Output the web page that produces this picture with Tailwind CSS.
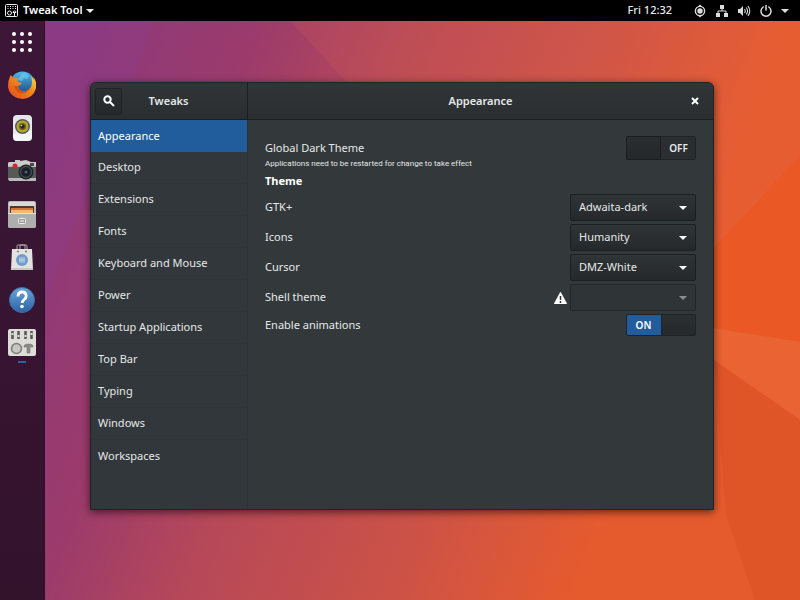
<!DOCTYPE html>
<html lang="en">
<head>
    <meta charset="UTF-8">
    <meta name="viewport" content="width=device-width, initial-scale=1.0">
    <title>Tweak Tool</title>
    <script src="https://cdn.jsdelivr.net/npm/@tailwindcss/browser@4"></script>
</head>
<body class="min-h-screen flex flex-col bg-[#b5475c] font-['Noto_Sans','Open_Sans',sans-serif] text-[11px] text-[#e6e8e8]">

    <!-- Top bar -->
    <header class="h-[21px] shrink-0 bg-black flex items-center justify-between pl-1 pr-[11px] font-semibold">
        <button class="flex items-center gap-[3px] text-white">
            <svg class="size-4" viewBox="0 0 16 16" fill="none" stroke="#eee">
                <rect x="1.5" y="1.5" width="12" height="12" rx="1" />
                <path d="M4 3v3M6.500 3v3M9 3v3M11.500 3v3" stroke-dasharray="1 1" />
                <circle cx="5.500" cy="10" r="2" />
                <path d="M9 9.500a1.500 1.500 0 0 1 3 0zM10.500 10v3" />
            </svg>
            Tweak Tool
            <svg class="w-2 h-1" viewBox="0 0 8 4" fill="#eee"><path d="M0 0h8L4 4z" /></svg>
        </button>
        <div class="flex items-center gap-[21px]">
            <time class="font-medium">Fri 12:32</time>
            <button class="flex items-center gap-2" aria-label="System menu">
                <svg class="size-3.5" viewBox="0 0 14 14" fill="#ddd">
                    <circle cx="7" cy="7" r="4.600" fill="none" stroke="#ddd" stroke-width="1.400" />
                    <circle cx="7" cy="7" r="2.700" />
                    <path d="M5 2.500L7 .5l2 2zM5 11.500l2 2 2-2z" />
                </svg>
                <svg class="size-3.5" viewBox="0 0 14 14" fill="#ddd">
                    <path d="M5 1h4v4H5zM1 9h4v4H1zM9 9h4v4H9z" />
                    <path d="M7 5v2M3 9V7h8v2" fill="none" stroke="#ddd" />
                </svg>
                <svg class="size-3.5" viewBox="0 0 14 14" fill="#ddd">
                    <path d="M1 5h2l3-3v10L3 9H1z" />
                    <path d="M7.500 5q1.500 2 0 4M9.300 3.500q2.500 3.500 0 7M11 2q3.500 5 0 10" fill="none" stroke="#ddd" stroke-width="1.100" />
                </svg>
                <svg class="size-3.5" viewBox="0 0 14 14" fill="none" stroke="#ddd" stroke-width="1.500" stroke-linecap="round">
                    <path d="M4.200 3A5 5 0 1 0 9.800 3M7 1.500V6" />
                </svg>
                <svg class="w-2 h-1" viewBox="0 0 8 4" fill="#ddd"><path d="M0 0h8L4 4z" /></svg>
            </button>
        </div>
    </header>

    <div class="flex-1 flex relative">
        <!-- Wallpaper -->
        <svg class="absolute inset-0 w-full h-full" viewBox="0 21 800 579" preserveAspectRatio="none" aria-hidden="true">
            <defs>
                <linearGradient id="wall" gradientUnits="userSpaceOnUse" x1="45" y1="100" x2="700" y2="350">
                    <stop offset="0" stop-color="#8b397f" />
                    <stop offset=".25" stop-color="#9c3b6b" />
                    <stop offset=".44" stop-color="#b64858" />
                    <stop offset=".71" stop-color="#cc5247" />
                    <stop offset=".96" stop-color="#e65b2e" />
                </linearGradient>
            </defs>
            <rect y="21" width="800" height="579" fill="url(#wall)" />
            <path d="M45 21H152L130 90 45 300z" fill="#8a4090" fill-opacity=".25" />
            <path d="M290 21L340 75 362 100 714 250 800 155V21z" fill="#f07050" fill-opacity=".12" />
            <path d="M800 155L714 248V328L800 342z" fill="#ea5826" />
            <path d="M714 328L800 342V420L714 360z" fill="#ea6433" />
            <path d="M714 360L800 420V600H755L726 515z" fill="#df5528" />
        </svg>

        <!-- Dock -->
        <nav class="relative w-[45px] shrink-0 bg-linear-to-b from-[#3c1738] to-[#33122c] border-r border-[#2d0f2a] flex flex-col items-center gap-[15px] pt-[7px]" aria-label="Dock">
            <button class="size-7" aria-label="Show applications">
                <svg viewBox="0 0 28 28" fill="#fff">
                    <circle cx="6" cy="6" r="2" /><circle cx="14" cy="6" r="2" /><circle cx="22" cy="6" r="2" />
                    <circle cx="6" cy="14" r="2" /><circle cx="14" cy="14" r="2" /><circle cx="22" cy="14" r="2" />
                    <circle cx="6" cy="22" r="2" /><circle cx="14" cy="22" r="2" /><circle cx="22" cy="22" r="2" />
                </svg>
            </button>
            <button class="size-7" aria-label="Firefox">
                <svg viewBox="0 0 28 28">
                    <defs>
                        <linearGradient id="globe" x2="0" y2="1"><stop stop-color="#52b8e8" /><stop offset="1" stop-color="#123f7c" /></linearGradient>
                        <linearGradient id="fox" x1=".2" y1="1" x2="1" y2=".2"><stop stop-color="#e4501c" /><stop offset=".6" stop-color="#f08a1c" /><stop offset="1" stop-color="#f9d13c" /></linearGradient>
                    </defs>
                    <circle cx="14.500" cy="13" r="12.500" fill="url(#globe)" />
                    <path d="M13 3l4-1 4 3-2 3-3-1-2 3-4-1z" fill="#79cdf0" fill-opacity=".6" />
                    <path d="M2.500 4Q4 5 5 7q3-1 5 0-1 2 0 4l4 1q-1 2-4 3 0 4 4 5 6 1 9-4 2-5 0-11 2 2 2.500 4V6q3 5 3 9-2 12-13.500 13Q2 27 0 16 0 9 2.500 4z" fill="url(#fox)" />
                    <path d="M10 15q0 4 4 5 4 1 8-2-5 6-11 4-4-2-5-7z" fill="#cb4515" fill-opacity=".7" />
                </svg>
            </button>
            <button class="size-7" aria-label="Rhythmbox">
                <svg viewBox="0 0 28 28">
                    <rect x="5" y="1" width="19" height="26" rx="4" fill="#e4e6ea" />
                    <path d="M5 20l19-3v6q0 4-4 4H9q-4 0-4-4z" fill="#fff" fill-opacity=".6" />
                    <circle cx="14.500" cy="12.500" r="7.500" fill="#55595c" />
                    <circle cx="14.500" cy="12.500" r="6" fill="#b9a92a" />
                    <circle cx="14.500" cy="12.500" r="3.800" fill="#77701a" />
                    <circle cx="14.500" cy="12.500" r="2.200" fill="#242622" />
                    <circle cx="13.500" cy="11.500" r=".8" fill="#ddd" />
                </svg>
            </button>
            <button class="size-7" aria-label="Shotwell">
                <svg viewBox="0 0 28 28">
                    <path d="M1 5h6V3h5v1l6-1 5 2h5v6H0V6z" fill="#c9cccb" />
                    <rect y="9" width="28" height="14" rx="1" fill="#555a58" />
                    <path d="M0 9h28v1H0zM0 21h28v3H1z" fill="#b7bab8" />
                    <rect x="22" y="6" width="4" height="3" fill="#454949" />
                    <circle cx="7" cy="9" r="2.500" fill="#d92430" />
                    <circle cx="18" cy="15" r="7.500" fill="#202326" />
                    <circle cx="18" cy="15" r="5.500" fill="none" stroke="#525a60" />
                    <circle cx="18" cy="15" r="3.500" fill="#171e2b" />
                    <circle cx="18" cy="15" r="1.500" fill="#52607a" />
                </svg>
            </button>
            <button class="size-7" aria-label="Files">
                <svg viewBox="0 0 28 28">
                    <rect y="1" width="28" height="27" rx="2" fill="#b9b9b7" />
                    <path d="M1 2h26v4H1z" fill="#dad9d6" />
                    <path d="M2 6h24v7H2z" fill="#503a2c" />
                    <path d="M3 8h22v2H3z" fill="#d9752e" />
                    <path d="M3 10h22v3H3z" fill="#f3b775" />
                    <path d="M0 14h28v12q0 2-2 2H2q-2 0-2-2z" fill="#aeafad" />
                    <path d="M0 13h28v1H0z" fill="#e5e5e3" />
                    <rect x="10.500" y="18.500" width="7" height="5" rx="1" fill="#999" stroke="#eee" />
                    <path d="M12 21h4" stroke="#fff" />
                </svg>
            </button>
            <button class="size-7" aria-label="Software">
                <svg viewBox="0 0 28 28">
                    <path d="M9 7V3q0-1 1-1h8q1 0 1 1v4M12 6V2h5v4" fill="none" stroke="#aaa8a8" />
                    <path d="M4 6h20l1 21H3z" fill="#e4e2e0" />
                    <path d="M3 25h22v2H3z" fill="#c9c6c5" />
                    <circle cx="10" cy="8.500" r="1" fill="#777" /><circle cx="18" cy="8.500" r="1" fill="#777" />
                    <circle cx="14" cy="17" r="6" fill="#6f9bc6" />
                    <path d="M12 14v6M14 14v6M16 14v6" stroke="#c0d7ec" />
                    <path d="M11 17h6" stroke="#c0d7ec" />
                </svg>
            </button>
            <button class="size-7" aria-label="Help">
                <svg viewBox="0 0 28 28">
                    <defs><linearGradient id="help" x2="0" y2="1"><stop stop-color="#6ba5d6" /><stop offset="1" stop-color="#2b63a5" /></linearGradient></defs>
                    <circle cx="14" cy="14" r="12.500" fill="url(#help)" stroke="#3c6ea8" />
                    <path d="M10 10.500q0-4.500 4-4.500t4.200 4q0 2-2 3.500t-2 3.500" fill="none" stroke="#fff" stroke-width="2.800" />
                    <circle cx="14" cy="20.500" r="1.800" fill="#fff" />
                </svg>
            </button>
            <button class="w-7 h-9" aria-label="Tweak Tool">
                <svg viewBox="0 0 28 36">
                    <rect y="0" width="28" height="27" rx="2" fill="#dddcd8" />
                    <path d="M4.500 2v8M10.500 2v8M17.500 2v8M23.500 2v8" stroke="#55554f" stroke-width="2.500" />
                    <path d="M4.500 4v2M10.500 6v2M17.500 6v2M23.500 4v2" stroke="#ddd" stroke-width="2" />
                    <circle cx="8.500" cy="19.500" r="5" fill="#c7c7c2" stroke="#7d7d78" stroke-width="1.500" />
                    <path d="M16 17q0-2 4.500-2t4.500 2v1h-3v6h-3v-6h-3z" fill="#8c8c87" stroke="#666" stroke-width=".5" />
                    <path d="M10 33h8" stroke="#315e9f" stroke-width="2" />
                </svg>
            </button>
        </nav>

        <!-- Tweaks window -->
        <main class="relative flex-1 flex pl-[45px] pr-[86px] pt-[61px] pb-[90px]">
            <section class="flex-1 flex flex-col rounded-t-md overflow-hidden bg-[#33393b] border border-[#202425] shadow-[0_2px_9px_rgba(0,0,0,0.6)]">
                <div class="h-[37px] flex shrink-0 bg-linear-to-b from-[#303537] to-[#2a2e30] border-b border-[#1b1e1f] font-semibold">
                    <div class="w-[157px] shrink-0 flex items-center pl-1 border-r border-[#1d2021]">
                        <button class="size-[27px] border border-[#1f2324] rounded-xs bg-linear-to-b from-[#2b3032] to-[#25292b] flex items-center justify-center" aria-label="Search">
                            <svg class="size-3" viewBox="0 0 12 12" fill="none" stroke="#fff" stroke-width="2"><circle cx="4.500" cy="4.500" r="3.200" /><path d="M7 7l4 4" /></svg>
                        </button>
                        <h2 class="flex-1 text-center pr-8">Tweaks</h2>
                    </div>
                    <div class="flex-1 flex items-center pr-3">
                        <h1 class="flex-1 text-center pl-6">Appearance</h1>
                        <button class="size-3 flex items-center justify-center" aria-label="Close">
                            <svg class="size-2" viewBox="0 0 8 8" stroke="#fff" stroke-width="2"><path d="M1 1l6 6M7 1L1 7" /></svg>
                        </button>
                    </div>
                </div>

                <div class="flex-1 flex">
                    <nav class="w-[157px] shrink-0 border-r border-[#2e3336] bg-[#32373b]" aria-label="Categories">
                        <a href="#" class="flex items-center h-8 px-[7px] bg-[#215d9c] text-white">Appearance</a>
                        <a href="#" class="flex items-center h-8 px-[7px] border-b border-[#2f3438]">Desktop</a>
                        <a href="#" class="flex items-center h-8 px-[7px] border-b border-[#2f3438]">Extensions</a>
                        <a href="#" class="flex items-center h-8 px-[7px] border-b border-[#2f3438]">Fonts</a>
                        <a href="#" class="flex items-center h-8 px-[7px] border-b border-[#2f3438]">Keyboard and Mouse</a>
                        <a href="#" class="flex items-center h-8 px-[7px] border-b border-[#2f3438]">Power</a>
                        <a href="#" class="flex items-center h-8 px-[7px] border-b border-[#2f3438]">Startup Applications</a>
                        <a href="#" class="flex items-center h-8 px-[7px] border-b border-[#2f3438]">Top Bar</a>
                        <a href="#" class="flex items-center h-8 px-[7px] border-b border-[#2f3438]">Typing</a>
                        <a href="#" class="flex items-center h-8 px-[7px] border-b border-[#2f3438]">Windows</a>
                        <a href="#" class="flex items-center h-8 px-[7px]">Workspaces</a>
                    </nav>

                    <form class="flex-1 flex flex-col gap-[3px] pl-[17px] pr-[17px] pt-4">
                        <div class="flex items-start justify-between">
                            <div class="pt-1">
                                <label for="dark" class="block leading-4">Global Dark Theme</label>
                                <p class="font-['Roboto',sans-serif] text-[8px] leading-4">Applications need to be restarted for change to take effect</p>
                            </div>
                            <div class="relative w-[70px] h-6 grid grid-cols-2 font-semibold text-[10px]">
                                <input id="dark" type="checkbox" class="absolute inset-0 appearance-none rounded-xs border border-[#1f2324] bg-[#2a2e30]">
                                <span class="relative pointer-events-none rounded-xs border border-[#1a1d1e] bg-linear-to-b from-[#292e30] to-[#24282a]"></span>
                                <span class="relative pointer-events-none flex items-center justify-center">OFF</span>
                            </div>
                        </div>
                        <h3 class="font-bold leading-5 text-white -mt-1">Theme</h3>
                        <div class="flex items-center justify-between">
                            <label for="gtk">GTK+</label>
                            <div class="relative w-[126px]">
                                <select id="gtk" class="appearance-none w-full h-[27px] px-2 rounded-xs border border-[#1c1f20] bg-linear-to-b from-[#2f3436] to-[#25292b]"><option>Adwaita-dark</option></select>
                                <svg class="absolute right-[9px] top-3 w-2 h-1 pointer-events-none" viewBox="0 0 8 4" fill="#fff"><path d="M0 0h8L4 4z" /></svg>
                            </div>
                        </div>
                        <div class="flex items-center justify-between">
                            <label for="icons">Icons</label>
                            <div class="relative w-[126px]">
                                <select id="icons" class="appearance-none w-full h-[27px] px-2 rounded-xs border border-[#1c1f20] bg-linear-to-b from-[#2f3436] to-[#25292b]"><option>Humanity</option></select>
                                <svg class="absolute right-[9px] top-3 w-2 h-1 pointer-events-none" viewBox="0 0 8 4" fill="#fff"><path d="M0 0h8L4 4z" /></svg>
                            </div>
                        </div>
                        <div class="flex items-center justify-between">
                            <label for="cursor">Cursor</label>
                            <div class="relative w-[126px]">
                                <select id="cursor" class="appearance-none w-full h-[27px] px-2 rounded-xs border border-[#1c1f20] bg-linear-to-b from-[#2f3436] to-[#25292b]"><option>DMZ-White</option></select>
                                <svg class="absolute right-[9px] top-3 w-2 h-1 pointer-events-none" viewBox="0 0 8 4" fill="#fff"><path d="M0 0h8L4 4z" /></svg>
                            </div>
                        </div>
                        <div class="flex items-center gap-[3px]">
                            <label for="shell" class="flex-1">Shell theme</label>
                            <svg class="w-[13px] h-3" viewBox="0 0 13 12"><path d="M6.500 0L13 12H0z" fill="#fff" stroke="#fff" stroke-linejoin="round" stroke-width=".5" /><path d="M6.500 4v4M6.500 9v2" stroke="#2b3032" stroke-width="1.500" /></svg>
                            <div class="relative w-[126px]">
                                <select id="shell" disabled class="appearance-none w-full h-[27px] px-2 rounded-xs border border-[#22272a] bg-[#2f3436] disabled:opacity-100"><option></option></select>
                                <svg class="absolute right-[9px] top-3 w-2 h-1 pointer-events-none" viewBox="0 0 8 4" fill="#8b8e8f"><path d="M0 0h8L4 4z" /></svg>
                            </div>
                        </div>
                        <div class="flex items-center justify-between">
                            <label for="anim">Enable animations</label>
                            <div class="relative w-[70px] h-[22px] grid grid-cols-2 font-semibold text-[10px]">
                                <input id="anim" type="checkbox" checked class="absolute inset-0 appearance-none rounded-xs border border-[#1f2324] bg-[#215d9c]">
                                <span class="relative pointer-events-none flex items-center justify-center text-white">ON</span>
                                <span class="relative pointer-events-none rounded-xs border border-[#1f2426] bg-linear-to-b from-[#2b3032] to-[#25292b]"></span>
                            </div>
                        </div>
                    </form>
                </div>
            </section>
        </main>
    </div>
</body>
</html>
